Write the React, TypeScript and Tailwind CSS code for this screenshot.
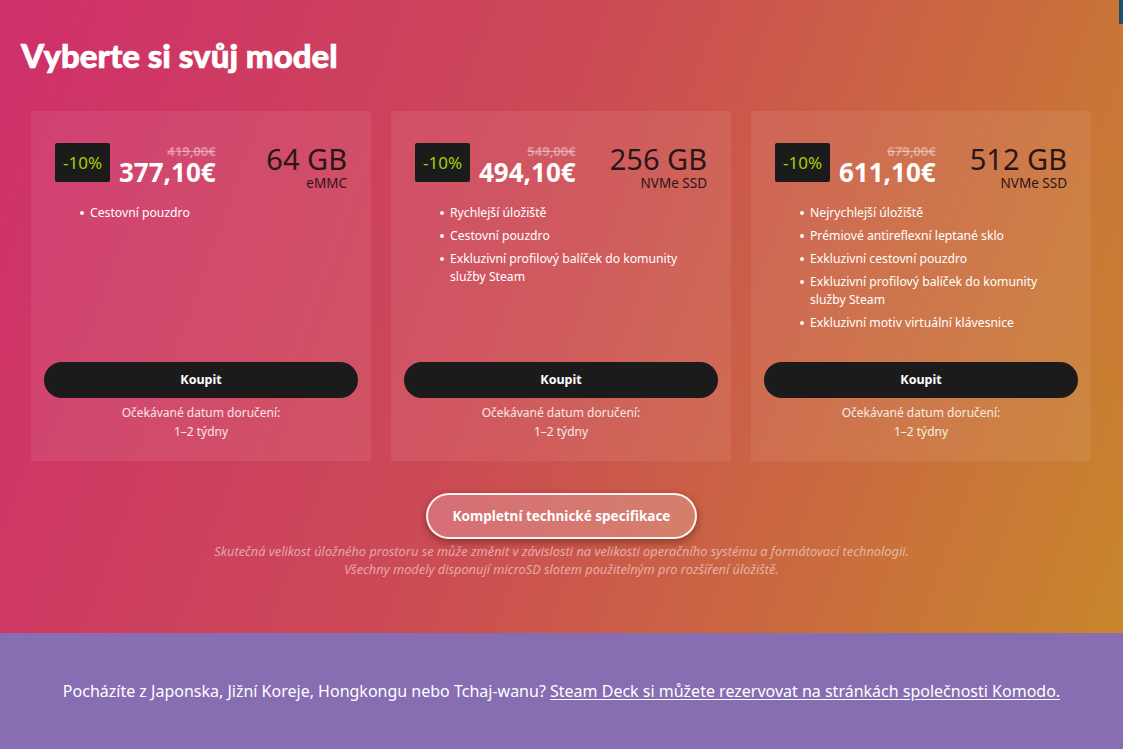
import React from "react";

type Model = {
  oldPrice: string;
  price: string;
  size: string;
  kind: string;
  features: string[];
};

const models: Model[] = [
  {
    oldPrice: "419,00€",
    price: "377,10€",
    size: "64 GB",
    kind: "eMMC",
    features: ["Cestovní pouzdro"],
  },
  {
    oldPrice: "549,00€",
    price: "494,10€",
    size: "256 GB",
    kind: "NVMe SSD",
    features: [
      "Rychlejší úložiště",
      "Cestovní pouzdro",
      "Exkluzivní profilový balíček do komunity služby Steam",
    ],
  },
  {
    oldPrice: "679,00€",
    price: "611,10€",
    size: "512 GB",
    kind: "NVMe SSD",
    features: [
      "Nejrychlejší úložiště",
      "Prémiové antireflexní leptané sklo",
      "Exkluzivní cestovní pouzdro",
      "Exkluzivní profilový balíček do komunity služby Steam",
      "Exkluzivní motiv virtuální klávesnice",
    ],
  },
];

function Card({ m }: { m: Model }) {
  return (
    <div className="flex h-[350px] flex-col bg-white/[0.07] px-[13px] pt-[32px] pb-[20px]">
      <div className="flex items-start justify-between px-[11px]">
        <div className="flex items-start">
          <div className="flex h-[39px] w-[55px] items-center justify-center rounded-[2px] bg-[#1b1b1b] text-[17px] text-[#a4d007]">
            -10%
          </div>
          <div className="ml-[9px] flex flex-col items-end">
            <div className="mt-[1px] text-[13px] font-bold leading-[15px] text-white/40 line-through">
              {m.oldPrice}
            </div>
            <div className="text-[26px] font-bold leading-[26px] text-white">
              {m.price}
            </div>
          </div>
        </div>
        <div className="flex flex-col items-end">
          <div className="text-[29px] leading-[32px] text-[#2a1518]">{m.size}</div>
          <div className="text-[13.5px] leading-[16px] text-[#2a1518]">{m.kind}</div>
        </div>
      </div>
      <ul className="mt-[13px] flex flex-col gap-[5px] pl-[36px] pr-[20px]">
        {m.features.map((f) => (
          <li key={f} className="flex text-[12.2px] leading-[18px] text-white">
            <span className="mr-[6px] mt-[7px] h-[4px] w-[4px] shrink-0 rounded-full bg-white" />
            <span>{f}</span>
          </li>
        ))}
      </ul>
      <div className="mt-auto">
        <button className="flex h-[36px] w-full items-center justify-center rounded-full bg-[#1b1b1b] text-[12.5px] font-bold text-white">
          Koupit
        </button>
        <div className="mt-[5px] text-center text-[12px] leading-[19px] text-white/85">
          <div>Očekávané datum doručení:</div>
          <div>1–2 týdny</div>
        </div>
      </div>
    </div>
  );
}

export default function App() {
  return (
    <div className="relative flex h-[749px] w-[1123px] flex-col overflow-hidden font-['Noto_Sans',sans-serif]">
      <section className="flex h-[633px] flex-col bg-[linear-gradient(110deg,#cf2f6b_0%,#cc4a55_45%,#c8862c_100%)] pt-[36px]">
        <h1 className="pl-[21px] font-['Lato',sans-serif] text-[33px] font-black leading-[38px] text-white [-webkit-text-stroke:0.7px_white]">
          Vyberte si svůj model
        </h1>
        <div className="mt-[37px] grid grid-cols-3 gap-[20px] px-[31px] pr-[32px]">
          {models.map((m) => (
            <Card key={m.size} m={m} />
          ))}
        </div>
        <div className="mt-[32px] flex justify-center">
          <button className="flex h-[46px] w-[271px] items-center justify-center rounded-full border-2 border-white/90 bg-white/20 text-[13.5px] font-bold text-white shadow-[0_3px_8px_rgba(60,10,10,0.45)]">
            Kompletní technické specifikace
          </button>
        </div>
        <div className="mt-[3px] text-center text-[12.8px] italic leading-[18px] text-white/50">
          <div>
            Skutečná velikost úložného prostoru se může změnit v závislosti na velikosti operačního systému a formátovací technologii.
          </div>
          <div>Všechny modely disponují microSD slotem použitelným pro rozšíření úložiště.</div>
        </div>
      </section>
      <section className="flex flex-1 items-center justify-center bg-[#876db2] text-[16px] text-white">
        <p>
          Pocházíte z Japonska, Jižní Koreje, Hongkongu nebo Tchaj-wanu?{" "}
          <a className="underline underline-offset-2">
            Steam Deck si můžete rezervovat na stránkách společnosti Komodo.
          </a>
        </p>
      </section>
      <div className="absolute right-0 top-0 h-[24px] w-[4px] bg-[#1f4e6e]" />
    </div>
  );
}
